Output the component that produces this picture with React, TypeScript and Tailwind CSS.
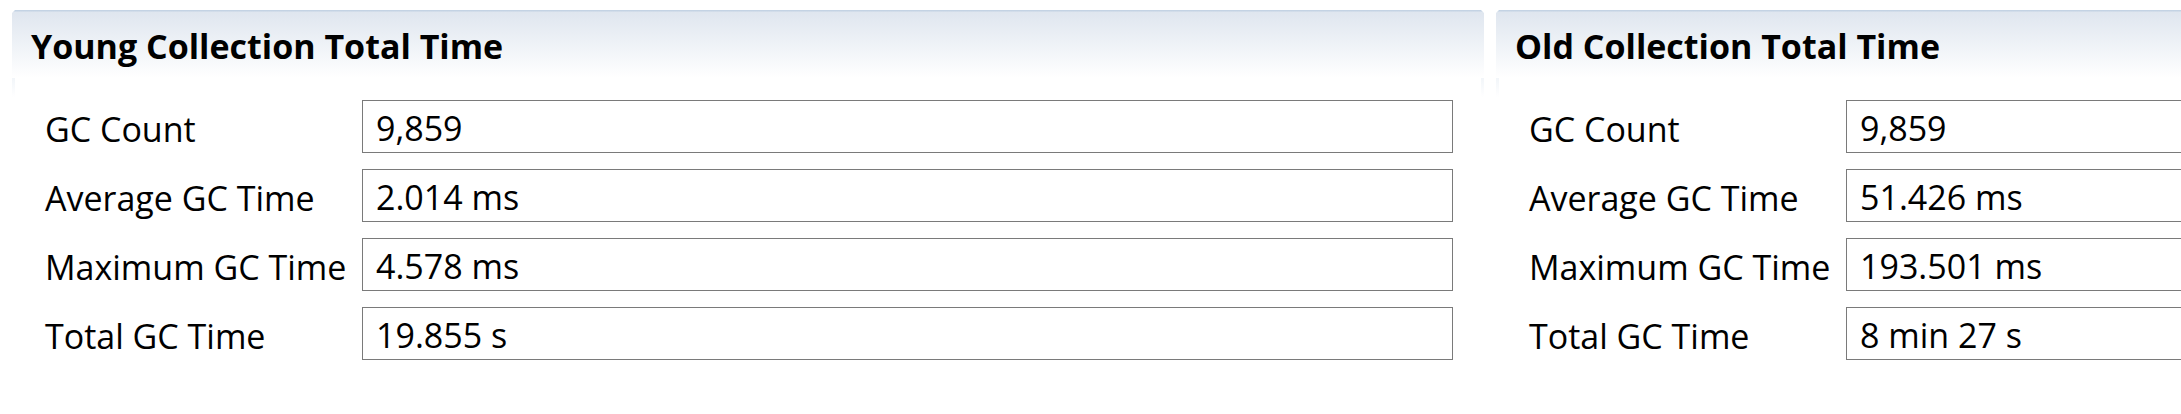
import React from 'react';

interface Stat {
  label: string;
  value: string;
}

const YOUNG: Stat[] = [
  { label: 'GC Count', value: '9,859' },
  { label: 'Average GC Time', value: '2.014 ms' },
  { label: 'Maximum GC Time', value: '4.578 ms' },
  { label: 'Total GC Time', value: '19.855 s' },
];

const OLD: Stat[] = [
  { label: 'GC Count', value: '9,859' },
  { label: 'Average GC Time', value: '51.426 ms' },
  { label: 'Maximum GC Time', value: '193.501 ms' },
  { label: 'Total GC Time', value: '8 min 27 s' },
];

function Section({ title, stats }: { title: string; stats: Stat[] }) {
  return (
    <section className="relative w-[1472px] shrink-0">
      {/* side borders fading out below the header */}
      <div className="absolute left-0 top-[3px] h-[84px] w-[3px] bg-[linear-gradient(to_bottom,#c4d3e4,#c4d3e400)]" />
      <div className="absolute right-0 top-[3px] h-[84px] w-[3px] bg-[linear-gradient(to_bottom,#c4d3e4,#c4d3e400)]" />

      {/* header */}
      <div className="h-[68px] pl-[19px] pt-[14px] [clip-path:polygon(3px_0,calc(100%-3px)_0,100%_3px,100%_100%,0_100%,0_3px)] bg-[linear-gradient(to_bottom,#c4d3e4_0px,#c4d3e4_1px,#dfe6ef_2px,#ffffff_68px)]">
        <h2 className="text-[34px] leading-[44px] font-bold text-black">{title}</h2>
      </div>

      {/* rows */}
      <div className="grid grid-cols-[317px_1fr] gap-y-[16px] pl-[33px] pr-[31px] pt-[22px]">
        {stats.map((s) => (
          <React.Fragment key={s.label}>
            <div className="flex h-[53px] items-center pt-[5px] text-[34px] text-black">{s.label}</div>
            <div className="flex h-[53px] items-center border border-[#7a7a7a] bg-white pl-[13px] pt-[3px] text-[34px] text-black">
              {s.value}
            </div>
          </React.Fragment>
        ))}
      </div>
    </section>
  );
}

export default function App() {
  return (
    <div className="flex h-[414px] w-[2181px] gap-[12px] overflow-hidden bg-white pl-[12px] pt-[10px] font-['Open_Sans','Noto_Sans',sans-serif]">
      <Section title="Young Collection Total Time" stats={YOUNG} />
      <Section title="Old Collection Total Time" stats={OLD} />
    </div>
  );
}
